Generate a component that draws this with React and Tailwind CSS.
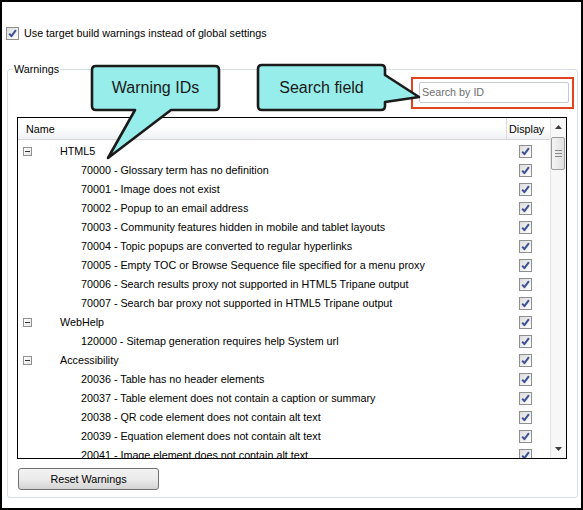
import React from "react";

const rows = [
  { group: true, label: "HTML5" },
  { label: "70000 - Glossary term has no definition" },
  { label: "70001 - Image does not exist" },
  { label: "70002 - Popup to an email address" },
  { label: "70003 - Community features hidden in mobile and tablet layouts" },
  { label: "70004 - Topic popups are converted to regular hyperlinks" },
  { label: "70005 - Empty TOC or Browse Sequence file specified for a menu proxy" },
  { label: "70006 - Search results proxy not supported in HTML5 Tripane output" },
  { label: "70007 - Search bar proxy not supported in HTML5 Tripane output" },
  { group: true, label: "WebHelp" },
  { label: "120000 - Sitemap generation requires help System url" },
  { group: true, label: "Accessibility" },
  { label: "20036 - Table has no header elements" },
  { label: "20037 - Table element does not contain a caption or summary" },
  { label: "20038 - QR code element does not contain alt text" },
  { label: "20039 - Equation element does not contain alt text" },
  { label: "20041 - Image element does not contain alt text" },
];

const CheckBox = () => (
  <div className="w-[13px] h-[13px] border border-[#8e8f8f] bg-linear-to-br from-[#dcdcdc] to-white flex items-center justify-center shrink-0">
    <svg width="11" height="11" viewBox="0 0 11 11">
      <path d="M2.2 5.6 L4.4 8.2 L8.9 2.2" fill="none" stroke="#3e5194" strokeWidth="2" strokeLinejoin="round" />
    </svg>
  </div>
);

const Minus = () => (
  <div className="w-[9px] h-[9px] border border-[#919191] bg-linear-to-br from-white to-[#e4e4e4] flex items-center justify-center shrink-0">
    <div className="w-[5px] h-[1px] bg-[#333]" />
  </div>
);

const App = () => {
  return (
    <div className="relative w-[583px] h-[510px] border-2 border-black bg-white text-[10.75px] text-black font-['Liberation_Sans',Arial,sans-serif] overflow-hidden">
      <div className="flex items-center pt-[25px] pl-[4px]">
        <CheckBox />
        <span className="ml-[5px] leading-[13px]">Use target build warnings instead of global settings</span>
      </div>

      <div className="relative mt-[29px] ml-[5px] w-[571px] h-[429px] border border-[#d5dfe5] rounded-[3px]">
        <span className="absolute left-[5px] -top-[8px] bg-white px-[1px] leading-[14px]">Warnings</span>

        <div className="flex justify-end mt-[7px] mr-[3px]">
          <div className="w-[163px] h-[32px] border-2 border-[#e1431f] pl-[6px] pt-[3px]">
            <div className="w-[150px] h-[21px] border border-[#c4cbd3] rounded-[2px] flex items-center pl-[2px] text-[#6d6d6d]">
              Search by ID
            </div>
          </div>
        </div>

        <div className="flex mt-[8px] ml-[9px] w-[550px] h-[342px] border border-black">
          <div className="flex flex-col w-[532px] overflow-hidden">
            <div className="flex h-[22px] pt-[2px] shrink-0 border-b border-[#d5d5d5] bg-linear-to-b from-white from-40% to-[#f0f1f3]">
              <div className="w-[488px] pl-[8px] flex items-center">Name</div>
              <div className="w-[44px] border-l border-[#dcdcdc] -mt-[2px] pt-[2px] pl-[2px] flex items-center">Display</div>
            </div>
            <div className="pt-[2px]">
              {rows.map((r, i) => (
                <div key={i} className="flex h-[19px] items-center">
                  <div className="w-[488px] flex items-center whitespace-nowrap">
                    {r.group ? (
                      <>
                        <div className="ml-[5px]">
                          <Minus />
                        </div>
                        <span className="ml-[28px]">{r.label}</span>
                      </>
                    ) : (
                      <span className="pl-[63px]">{r.label}</span>
                    )}
                  </div>
                  <div className="w-[44px] pl-[13px] flex items-center">
                    <CheckBox />
                  </div>
                </div>
              ))}
            </div>
          </div>
          <div className="w-[16px] flex flex-col bg-[#f7f7f7] border-l border-[#e6e6e6]">
            <div className="h-[18px] flex items-center justify-center">
              <svg width="7" height="4" viewBox="0 0 7 4">
                <path d="M0 4 L3.5 0 L7 4 Z" fill="#3c3c3c" />
              </svg>
            </div>
            <div className="mt-[1px] w-[14px] h-[33px] border border-[#9b9b9b] rounded-[2px] bg-linear-to-r from-[#f4f4f4] to-[#e0e0e0] flex flex-col items-center justify-center gap-[2px]">
              <div className="w-[7px] h-[1px] bg-[#8a8a8a]" />
              <div className="w-[7px] h-[1px] bg-[#8a8a8a]" />
              <div className="w-[7px] h-[1px] bg-[#8a8a8a]" />
            </div>
            <div className="flex-1" />
            <div className="h-[18px] flex items-center justify-center">
              <svg width="7" height="4" viewBox="0 0 7 4">
                <path d="M0 0 L7 0 L3.5 4 Z" fill="#3c3c3c" />
              </svg>
            </div>
          </div>
        </div>

        <button className="mt-[9px] ml-[10px] w-[141px] h-[22px] border border-[#707070] rounded-[3px] bg-linear-to-b from-[#f2f2f2] via-[#ebebeb] to-[#d4d4d4] text-[10.75px] text-black">
          Reset Warnings
        </button>
      </div>

      {/* callout annotations */}
      <svg className="absolute -left-[2px] -top-[2px] pointer-events-none" width="583" height="510" viewBox="0 0 583 510">
        <path
          d="M96 66 H215 Q219 66 219 70 V106 Q219 110 215 110 H171 L108 158 L135 110 H96 Q92 110 92 106 V70 Q92 66 96 66 Z"
          fill="#97ede9"
          stroke="#1b1b1b"
          strokeWidth="2.6"
          strokeLinejoin="round"
        />
        <path
          d="M262 65 H381 Q385 65 385 69 V75 L419 97 L385 102 V106 Q385 110 381 110 H262 Q258 110 258 106 V69 Q258 65 262 65 Z"
          fill="#97ede9"
          stroke="#1b1b1b"
          strokeWidth="2.6"
          strokeLinejoin="round"
        />
      </svg>
      <div className="absolute left-[90px] top-[64px] w-[127px] h-[44px] flex items-center justify-center text-[16px] text-[#1a1a1a] pointer-events-none">
        Warning IDs
      </div>
      <div className="absolute left-[256px] top-[64px] w-[127px] h-[44px] flex items-center justify-center text-[16px] text-[#1a1a1a] pointer-events-none">
        Search field
      </div>
    </div>
  );
};

export default App;
